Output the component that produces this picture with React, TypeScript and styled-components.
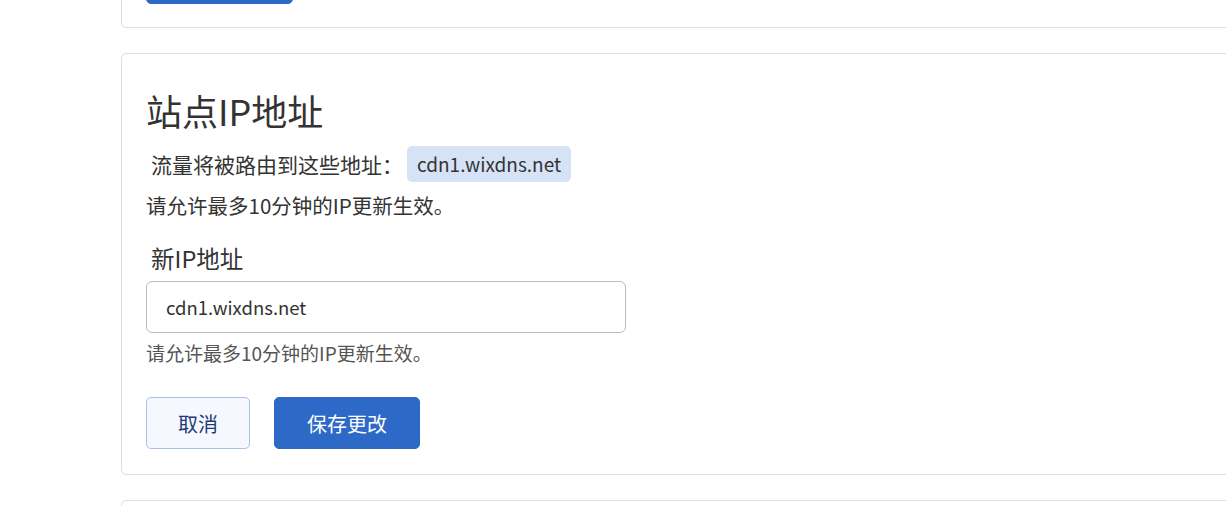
import React from "react";
import styled, { createGlobalStyle } from "styled-components";

const Global = createGlobalStyle`
  html, body { margin: 0; padding: 0; background: #ffffff; overflow: hidden; }
  body { font-family: "Noto Sans CJK SC", "Noto Sans", sans-serif; color: #333333; }
  * { box-sizing: border-box; }
`;

const Page = styled.div`
  width: 1400px;
  padding-left: 121px;
  display: flex;
  flex-direction: column;
  gap: 25px;
  margin-top: -73px;
`;

const Card = styled.section`
  border: 1px solid #dedede;
  border-radius: 5px;
  background: #fff;
  padding: 24px 24px 25px;
  display: flex;
  flex-direction: column;
  align-items: flex-start;
`;

const PrevCard = styled(Card)`
  padding-bottom: 23px;
`;

const NextCard = styled(Card)`
  height: 200px;
`;

const Title = styled.h2`
  margin: 11px 0 0;
  font-size: 36px;
  line-height: 43px;
  font-weight: 400;
  color: #333;
`;

const FlowRow = styled.div`
  margin-top: 14px;
  padding-left: 5px;
  display: flex;
  align-items: center;
  gap: 4px;
  font-size: 21px;
  line-height: 36px;
`;

const Badge = styled.span`
  background: #d6e3f6;
  border-radius: 5px;
  padding: 0 10px;
  height: 36px;
  display: inline-flex;
  align-items: center;
  font-size: 19px;
  color: #333;
`;

const Note = styled.p`
  margin: 8px 0 0;
  font-size: 20.5px;
  line-height: 30px;
`;

const Label = styled.label`
  margin-top: 22px;
  padding-left: 5px;
  font-size: 23.5px;
  line-height: 33px;
  color: #333;
`;

const Input = styled.input`
  margin-top: 6px;
  width: 480px;
  height: 52px;
  border: 1px solid #bdbdbd;
  border-radius: 6px;
  padding: 0 19px;
  font-family: inherit;
  font-size: 18.5px;
  color: #333;
  outline: none;
`;

const Help = styled.p`
  margin: 6px 0 0;
  font-size: 19px;
  line-height: 27px;
  color: #555;
`;

const Actions = styled.div`
  margin-top: 31px;
  display: flex;
  gap: 24px;
`;

const Button = styled.button<{ $primary?: boolean }>`
  height: 52px;
  padding: 0 ${(p) => (p.$primary ? "32px" : "31px")};
  border-radius: 5px;
  font-family: inherit;
  font-size: 20px;
  cursor: pointer;
  border: 1px solid ${(p) => (p.$primary ? "#2d69c6" : "#a9c1ea")};
  background: ${(p) => (p.$primary ? "#2d69c6" : "#f5f8fe")};
  color: ${(p) => (p.$primary ? "#ffffff" : "#1c3a75")};
`;

const PrevButton = styled(Button)`
  width: 147px;
`;

export default function App() {
  return (
    <>
      <Global />
      <Page>
        <PrevCard>
          <PrevButton $primary aria-label="保存更改" />
        </PrevCard>
        <Card>
          <Title>站点IP地址</Title>
          <FlowRow>
            <span>流量将被路由到这些地址：</span>
            <Badge>cdn1.wixdns.net</Badge>
          </FlowRow>
          <Note>请允许最多10分钟的IP更新生效。</Note>
          <Label htmlFor="ip">新IP地址</Label>
          <Input id="ip" defaultValue="cdn1.wixdns.net" />
          <Help>请允许最多10分钟的IP更新生效。</Help>
          <Actions>
            <Button>取消</Button>
            <Button $primary>保存更改</Button>
          </Actions>
        </Card>
        <NextCard />
      </Page>
    </>
  );
}
